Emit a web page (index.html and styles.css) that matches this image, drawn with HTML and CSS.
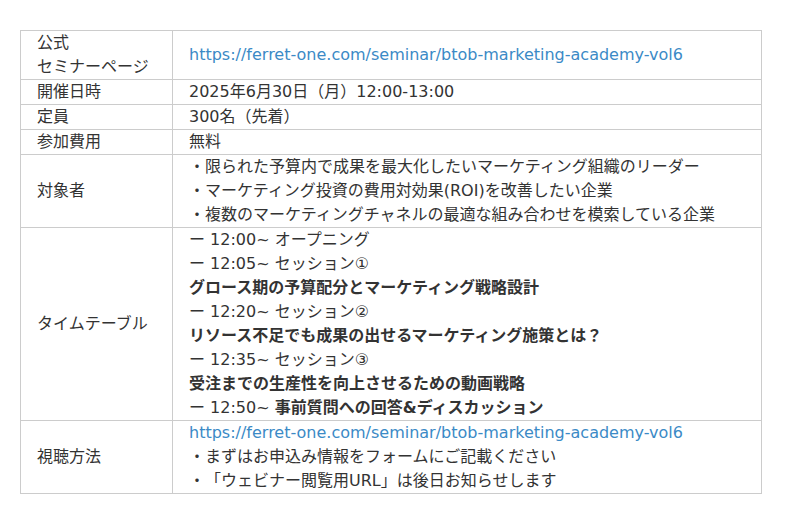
FILE: index.html
```html
<html>
<head>
<meta charset="utf-8">
<link rel="stylesheet" href="styles.css">
</head>
<body>
	<table class="info">
		<tr>
			<th>公式<br>セミナーページ</th>
			<td><a class="link" href="#">https://ferret-one.com/seminar/btob-marketing-academy-vol6</a></td>
		</tr>
		<tr>
			<th>開催日時</th>
			<td>2025年6月30日（月）12:00-13:00</td>
		</tr>
		<tr>
			<th>定員</th>
			<td>300名（先着）</td>
		</tr>
		<tr>
			<th>参加費用</th>
			<td>無料</td>
		</tr>
		<tr>
			<th>対象者</th>
			<td>・限られた予算内で成果を最大化したいマーケティング組織のリーダー<br>・マーケティング投資の費用対効果(ROI)を改善したい企業<br>・複数のマーケティングチャネルの最適な組み合わせを模索している企業</td>
		</tr>
		<tr>
			<th>タイムテーブル</th>
			<td>
				ー 12:00~ オープニング<br>
				ー 12:05~ セッション①<br>
				<b>グロース期の予算配分とマーケティング戦略設計</b><br>
				ー 12:20~ セッション②<br>
				<b>リソース不足でも成果の出せるマーケティング施策とは？</b><br>
				ー 12:35~ セッション③<br>
				<b>受注までの生産性を向上させるための動画戦略</b><br>
				ー 12:50~ <b>事前質問への回答&amp;ディスカッション</b>
			</td>
		</tr>
		<tr>
			<th>視聴方法</th>
			<td><a class="link" href="#">https://ferret-one.com/seminar/btob-marketing-academy-vol6</a><br>・まずはお申込み情報をフォームにご記載ください<br>・「ウェビナー閲覧用URL」は後日お知らせします</td>
		</tr>
	</table>
</body>
</html>
```

FILE: styles.css
```css
	body {
		margin: 0;
		padding: 30px 20px;
		background: #fff;
		font-family: "DejaVu Sans", "Noto Sans CJK JP", sans-serif;
		color: #333;
		text-spacing-trim: space-all;
	}
	.info {
		width: 742px;
		border-collapse: collapse;
		font-size: 16px;
		line-height: 24px;
	}
	.info th, .info td {
		border: 1px solid #ccc;
		padding: 0 16px;
		text-align: left;
		vertical-align: middle;
		font-weight: normal;
	}
	.info th {
		width: 119px;
	}
	.info b {
		font-weight: bold;
	}
	.link {
		color: #3b8ac6;
		text-decoration: none;
	}
```
